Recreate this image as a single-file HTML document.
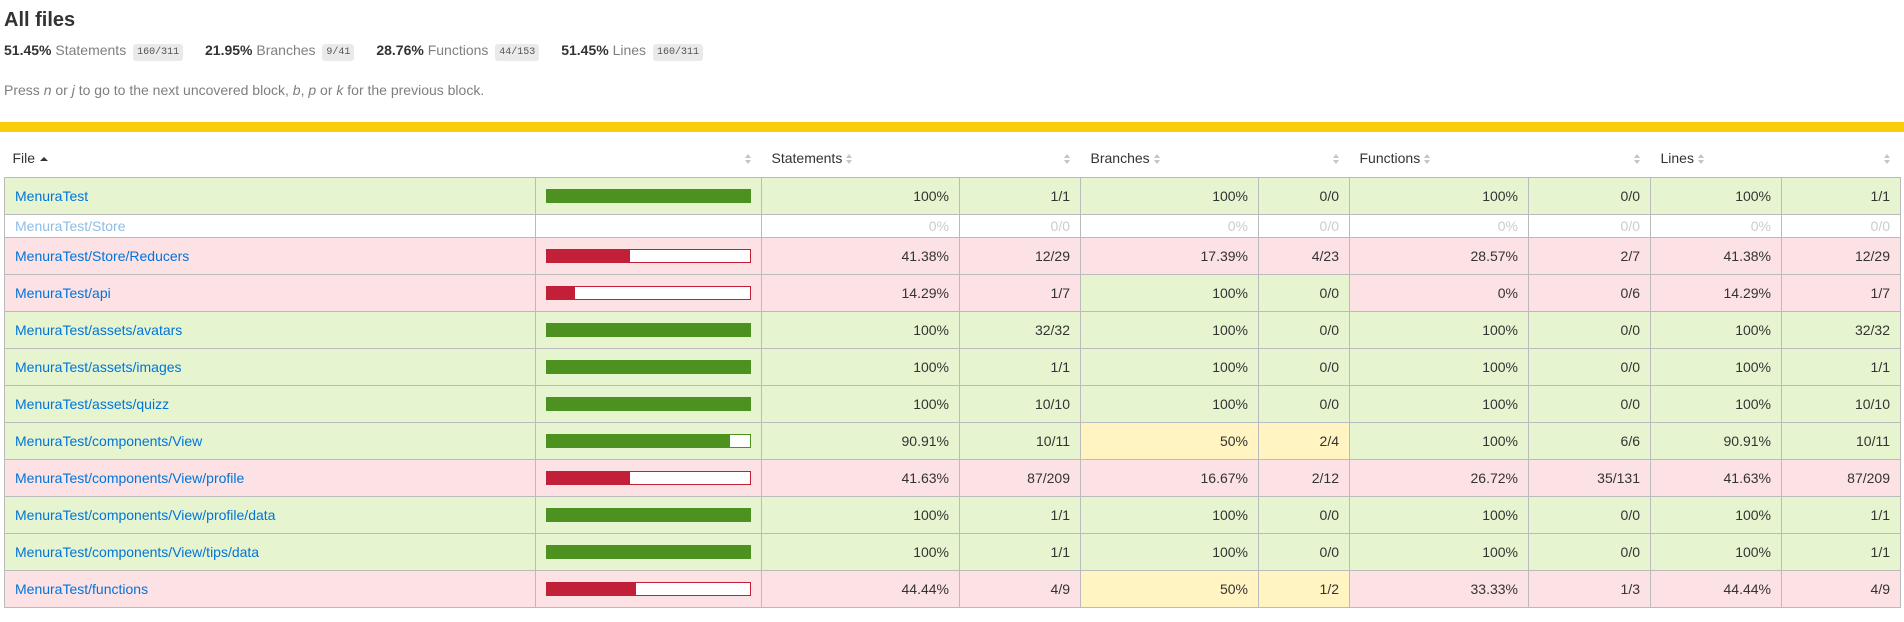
<!DOCTYPE html>
<html><head><meta charset="utf-8"><style>
body{margin:0;background:#fff;font-family:"Liberation Sans",Arial,sans-serif;font-size:14px;color:#333;width:1904px;height:622px;overflow:hidden}
h1{font-size:20px;margin:0;position:absolute;left:4px;top:9px;font-weight:bold;color:#333}
.stats{position:absolute;left:4px;top:42px;font-size:14px;white-space:nowrap}
.stats .s{margin-right:18px}
.stats b{font-weight:bold}
.stats .q{color:#7f7f7f}
.fr{font-family:"Liberation Mono",monospace;font-size:10px;background:#eaeaea;color:#555;padding:3px 4px;border-radius:3px;margin-left:3px;position:relative;top:-1px}
.press{position:absolute;left:4px;top:82px;color:#7f7f7f}
.yb{position:absolute;left:0;top:122px;width:1904px;height:10px;background:#f9cd0b}
table{position:absolute;left:4px;top:133px;border-collapse:collapse;table-layout:fixed;width:1896px}
th{font-weight:normal;text-align:left;height:44px;padding:6px 10px 0;white-space:nowrap;color:#333;border-bottom:1px solid #bbb;box-sizing:border-box}
td{border:1px solid #bbb;padding:0 10px;height:36px;text-align:right;white-space:nowrap}
td.f{text-align:left}
td.f a{color:#0074d9;text-decoration:none}
tr.e td{height:22px;color:#ccc;background:#fff}
tr.e td.f a{color:#8fbce6}
.h{background:#e6f5d0}.l{background:#fce1e5}.m{background:#fff4c2}
.bar{width:203px;height:12px;border:1px solid;background:#fff;margin-left:0}
.g .bar{border-color:#4d9221}.r .bar{border-color:#c21f39}
.bar i{display:block;height:12px}
.g .bar i{background:#4d9221}.r .bar i{background:#c21f39}
.so{display:inline-block;width:7px;height:10px;position:relative;vertical-align:-1px;margin-left:4px}
.so:before{content:"";position:absolute;left:0;top:0;border-left:3.5px solid transparent;border-right:3.5px solid transparent;border-bottom:4px solid #c5c5c5}
.so:after{content:"";position:absolute;left:0;top:6px;border-left:3.5px solid transparent;border-right:3.5px solid transparent;border-top:4px solid #c5c5c5}
.up{display:inline-block;border-left:4px solid transparent;border-right:4px solid transparent;border-bottom:4px solid #333;margin-left:5px;vertical-align:2px}
th.rt{text-align:right}
</style></head><body>
<h1>All files</h1>
<div class="stats"><span class="s"><b>51.45%</b> <span class="q">Statements</span> <span class="fr">160/311</span></span>
<span class="s"><b>21.95%</b> <span class="q">Branches</span> <span class="fr">9/41</span></span>
<span class="s"><b>28.76%</b> <span class="q">Functions</span> <span class="fr">44/153</span></span>
<span class="s"><b>51.45%</b> <span class="q">Lines</span> <span class="fr">160/311</span></span></div>
<div class="press">Press <i>n</i> or <i>j</i> to go to the next uncovered block, <i>b</i>, <i>p</i> or <i>k</i> for the previous block.</div>
<div class="yb"></div>
<table>
<colgroup><col style="width:531px"><col style="width:226px"><col style="width:198px"><col style="width:121px"><col style="width:178px"><col style="width:91px"><col style="width:179px"><col style="width:122px"><col style="width:131px"><col style="width:119px"></colgroup>
<tr><th style="padding-left:8px">File<span class="up"></span></th><th class="rt"><span class="so"></span></th><th>Statements<span class="so"></span></th><th class="rt"><span class="so"></span></th><th>Branches<span class="so"></span></th><th class="rt"><span class="so"></span></th><th>Functions<span class="so"></span></th><th class="rt"><span class="so"></span></th><th>Lines<span class="so"></span></th><th class="rt"><span class="so"></span></th></tr>
<tr><td class="f h"><a>MenuraTest</a></td><td class="h g"><div class="bar"><i style="width:100%"></i></div></td><td class="h">100%</td><td class="h">1/1</td><td class="h">100%</td><td class="h">0/0</td><td class="h">100%</td><td class="h">0/0</td><td class="h">100%</td><td class="h">1/1</td></tr>
<tr class="e"><td class="f"><a>MenuraTest/Store</a></td><td></td><td>0%</td><td>0/0</td><td>0%</td><td>0/0</td><td>0%</td><td>0/0</td><td>0%</td><td>0/0</td></tr>
<tr><td class="f l"><a>MenuraTest/Store/Reducers</a></td><td class="l r"><div class="bar"><i style="width:41%"></i></div></td><td class="l">41.38%</td><td class="l">12/29</td><td class="l">17.39%</td><td class="l">4/23</td><td class="l">28.57%</td><td class="l">2/7</td><td class="l">41.38%</td><td class="l">12/29</td></tr>
<tr><td class="f l"><a>MenuraTest/api</a></td><td class="l r"><div class="bar"><i style="width:14%"></i></div></td><td class="l">14.29%</td><td class="l">1/7</td><td class="h">100%</td><td class="h">0/0</td><td class="l">0%</td><td class="l">0/6</td><td class="l">14.29%</td><td class="l">1/7</td></tr>
<tr><td class="f h"><a>MenuraTest/assets/avatars</a></td><td class="h g"><div class="bar"><i style="width:100%"></i></div></td><td class="h">100%</td><td class="h">32/32</td><td class="h">100%</td><td class="h">0/0</td><td class="h">100%</td><td class="h">0/0</td><td class="h">100%</td><td class="h">32/32</td></tr>
<tr><td class="f h"><a>MenuraTest/assets/images</a></td><td class="h g"><div class="bar"><i style="width:100%"></i></div></td><td class="h">100%</td><td class="h">1/1</td><td class="h">100%</td><td class="h">0/0</td><td class="h">100%</td><td class="h">0/0</td><td class="h">100%</td><td class="h">1/1</td></tr>
<tr><td class="f h"><a>MenuraTest/assets/quizz</a></td><td class="h g"><div class="bar"><i style="width:100%"></i></div></td><td class="h">100%</td><td class="h">10/10</td><td class="h">100%</td><td class="h">0/0</td><td class="h">100%</td><td class="h">0/0</td><td class="h">100%</td><td class="h">10/10</td></tr>
<tr><td class="f h"><a>MenuraTest/components/View</a></td><td class="h g"><div class="bar"><i style="width:90%"></i></div></td><td class="h">90.91%</td><td class="h">10/11</td><td class="m">50%</td><td class="m">2/4</td><td class="h">100%</td><td class="h">6/6</td><td class="h">90.91%</td><td class="h">10/11</td></tr>
<tr><td class="f l"><a>MenuraTest/components/View/profile</a></td><td class="l r"><div class="bar"><i style="width:41%"></i></div></td><td class="l">41.63%</td><td class="l">87/209</td><td class="l">16.67%</td><td class="l">2/12</td><td class="l">26.72%</td><td class="l">35/131</td><td class="l">41.63%</td><td class="l">87/209</td></tr>
<tr><td class="f h"><a>MenuraTest/components/View/profile/data</a></td><td class="h g"><div class="bar"><i style="width:100%"></i></div></td><td class="h">100%</td><td class="h">1/1</td><td class="h">100%</td><td class="h">0/0</td><td class="h">100%</td><td class="h">0/0</td><td class="h">100%</td><td class="h">1/1</td></tr>
<tr><td class="f h"><a>MenuraTest/components/View/tips/data</a></td><td class="h g"><div class="bar"><i style="width:100%"></i></div></td><td class="h">100%</td><td class="h">1/1</td><td class="h">100%</td><td class="h">0/0</td><td class="h">100%</td><td class="h">0/0</td><td class="h">100%</td><td class="h">1/1</td></tr>
<tr><td class="f l"><a>MenuraTest/functions</a></td><td class="l r"><div class="bar"><i style="width:44%"></i></div></td><td class="l">44.44%</td><td class="l">4/9</td><td class="m">50%</td><td class="m">1/2</td><td class="l">33.33%</td><td class="l">1/3</td><td class="l">44.44%</td><td class="l">4/9</td></tr>
</table>
</body></html>
